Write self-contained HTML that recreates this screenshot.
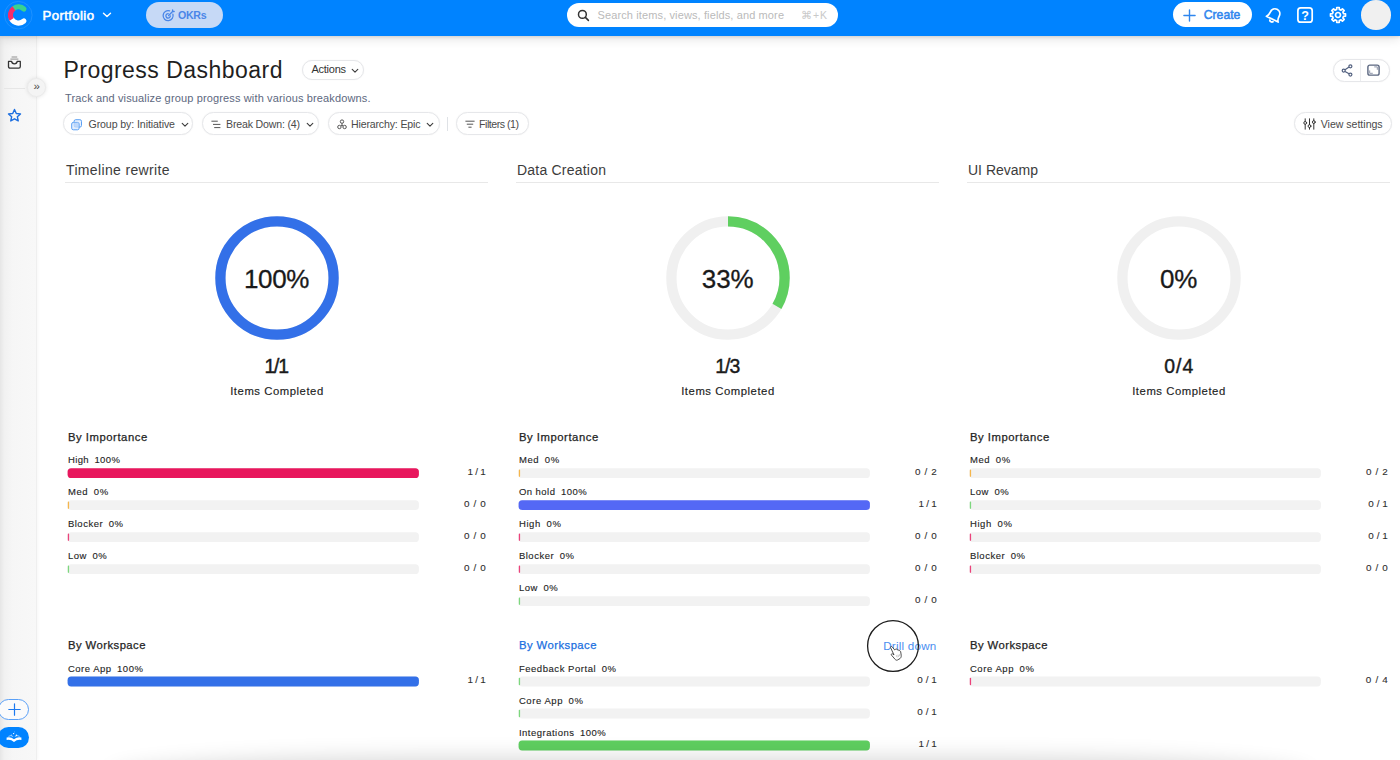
<!DOCTYPE html>
<html lang="en"><head><meta charset="utf-8"><title>Progress Dashboard</title>
<style>
*{box-sizing:border-box;margin:0;padding:0}
html,body{width:1400px;height:760px;overflow:hidden;background:#fff;font-family:"Liberation Sans",sans-serif}
body{position:relative}
.abs{position:absolute}
.t{position:absolute;white-space:pre;line-height:1;display:block}
.p{margin-left:2.3px}
.hdr{position:absolute;left:0;top:0;width:1400px;height:35.6px;background:#0083ff;box-shadow:0 1px 3px rgba(0,0,0,.12),0 3px 10px rgba(0,0,0,.11)}
.side{position:absolute;left:0;top:36px;width:36px;height:724px;background:linear-gradient(90deg,#e6e6e6 0,#f1f1f1 12%,#f6f6f6 35%,#f8f8f8 100%);box-shadow:1px 0 0 #efefef,2px 0 3px rgba(0,0,0,.035)}
.pill{position:absolute;border:1px solid #e6e7ea;border-radius:12px;background:#fff;box-shadow:0 0 1.5px rgba(0,0,0,.06)}
.hr{position:absolute;height:1px;background:#e8e8e8}
.trk{position:absolute;width:351.6px;height:10px;border-radius:4px;background:#f2f2f2;overflow:hidden}
.trk i{display:block;height:100%;border-radius:4px}

</style></head>
<body>
<div class="side"></div>
<div class="hdr"></div>
<!-- logo -->
<svg class="abs" style="left:0;top:0" width="36" height="32" viewBox="0 0 36 32">
  <circle cx="18.3" cy="15.2" r="13.8" fill="#0083ff" stroke="#2193ff" stroke-width=".9"/>
  <g fill="none" stroke-width="5.1">
  <path d="M13.74 8.45 A8.1 8.1 0 0 1 23.92 8.98" stroke="#3ad28f" stroke-linecap="round"/>
  <path d="M11.49 19.05 A8.1 8.1 0 0 0 23.92 21.02" stroke="#fff" stroke-linecap="round"/>
  <path d="M13.9 8.3 A8.1 8.1 0 0 0 11.7 19.4" stroke="#f72a69"/>
  </g>
</svg>
<!-- portfolio chevron -->
<svg class="abs" style="left:102px;top:11px" width="10" height="8" viewBox="0 0 10 8"><path d="M1.5 2.2 L5 5.6 L8.5 2.2" fill="none" stroke="#fff" stroke-width="1.4" stroke-linecap="round" stroke-linejoin="round"/></svg>
<!-- OKRs pill -->
<div class="abs" style="left:146px;top:2px;width:77px;height:25.5px;border-radius:13px;background:#c6d9f6"></div>
<svg class="abs" style="left:162px;top:8.5px" width="13" height="13" viewBox="0 0 13 13" fill="none" stroke="#4a86e8" stroke-width="1.3" stroke-linecap="round">
  <path d="M10.9 5.2 A5 5 0 1 1 7.6 1.9"/><path d="M8.3 6.8 A2.2 2.2 0 1 1 6.2 4.7"/><path d="M6.6 6.5 L10.6 2.5 M10.6 2.5 L10.6 .9 M10.6 2.5 L12.2 2.5"/>
</svg>
<!-- search -->
<div class="abs" style="left:566.5px;top:2.5px;width:271.5px;height:24.5px;border-radius:12.5px;background:#fff"></div>
<svg class="abs" style="left:577px;top:9px" width="13" height="13" viewBox="0 0 13 13" fill="none" stroke="#333" stroke-width="1.5" stroke-linecap="round"><circle cx="5.4" cy="5.4" r="3.9"/><path d="M8.4 8.4 L11.4 11.4"/></svg>
<!-- create -->
<div class="abs" style="left:1173.3px;top:2.4px;width:78.3px;height:24.8px;border-radius:12.5px;background:#fff"></div>
<svg class="abs" style="left:1183px;top:8.5px" width="13" height="13" viewBox="0 0 13 13" fill="none" stroke="#2f86ee" stroke-width="1.4" stroke-linecap="round"><path d="M6.5 .9 V12.1 M.9 6.5 H12.1"/></svg>
<!-- bell -->
<svg class="abs" style="left:1262px;top:3px" width="24" height="24" viewBox="-12 -12 24 24" fill="none" stroke="#fff" stroke-width="1.7" stroke-linecap="round" stroke-linejoin="round">
  <g transform="translate(0.2,0.2) rotate(26)"><path d="M-6.6 4.4 C-4.8 3 -4.9 .8 -4.9 -1.4 C-4.9 -4.4 -2.8 -6.6 0 -6.6 C2.8 -6.6 4.9 -4.4 4.9 -1.4 C4.9 .8 4.8 3 6.6 4.4 Z"/><path d="M-1.7 6.4 C-1 7.6 1 7.6 1.7 6.4" stroke-width="1.9"/></g>
</svg>
<!-- help -->
<svg class="abs" style="left:1296px;top:6px" width="18" height="18" viewBox="0 0 18 18" fill="none" stroke="#fff" stroke-width="1.7" stroke-linejoin="round"><rect x="1.9" y="1.9" width="14.3" height="14.3" rx="2.8"/></svg>
<span class="t" style="left:1301.3px;top:9.9px;font-size:12.6px;font-weight:700;color:#fff">?</span>
<!-- gear -->
<svg class="abs" style="left:1327.7px;top:5px" width="20" height="20" viewBox="-10 -10 20 20" fill="none" stroke="#fff" stroke-width="1.7" stroke-linejoin="round">
  <circle r="2.5"/>
  <path d="M-1.33 -5.54 L-1.25 -7.50 L1.25 -7.50 L1.33 -5.54 L2.98 -4.86 L4.42 -6.18 L6.18 -4.42 L4.86 -2.98 L5.54 -1.33 L7.50 -1.25 L7.50 1.25 L5.54 1.33 L4.86 2.98 L6.18 4.42 L4.42 6.18 L2.98 4.86 L1.33 5.54 L1.25 7.50 L-1.25 7.50 L-1.33 5.54 L-2.98 4.86 L-4.42 6.18 L-6.18 4.42 L-4.86 2.98 L-5.54 1.33 L-7.50 1.25 L-7.50 -1.25 L-5.54 -1.33 L-4.86 -2.98 L-6.18 -4.42 L-4.42 -6.18 L-2.98 -4.86 Z"/>
</svg>
<!-- avatar -->
<div class="abs" style="left:1361.3px;top:0;width:29.6px;height:29.6px;border-radius:50%;background:#f0f0f0"></div>

<!-- sidebar icons -->
<svg class="abs" style="left:7px;top:56px" width="15" height="14" viewBox="0 0 15 14" fill="none" stroke="#333" stroke-width="1.3" stroke-linecap="round" stroke-linejoin="round">
  <path d="M5 1 H9.8 M3.8 3.1 H11" stroke="#777" stroke-width=".8"/><path d="M1.5 5.4 H4.6 C4.8 7.2 5.9 7.8 7.4 7.8 C8.9 7.8 10 7.2 10.2 5.4 H13.3 V10.6 C13.3 11.6 12.7 12.2 11.7 12.2 H3.1 C2.1 12.2 1.5 11.6 1.5 10.6 Z"/>
</svg>
<div class="abs" style="left:4px;top:87.5px;width:21px;height:1px;background:#e6e6e6"></div>
<div class="abs" style="left:26.9px;top:78.3px;width:18.8px;height:18.8px;border-radius:50%;background:#f4f4f4;border:1px solid #ebebeb;box-shadow:0 0 4px rgba(0,0,0,.10)"></div>
<span class="t" style="left:33.4px;top:81.2px;font-size:11.5px;color:#4a4a4a">&#187;</span>
<svg class="abs" style="left:7.2px;top:108px" width="15" height="15" viewBox="0 0 16 16" fill="none" stroke="#1d6fe0" stroke-width="1.5" stroke-linejoin="round"><path d="M8 1.6 L9.9 5.8 L14.4 6.3 L11 9.3 L12 13.8 L8 11.5 L4 13.8 L5 9.3 L1.6 6.3 L6.1 5.8 Z"/></svg>
<div class="abs" style="left:-2px;top:698.7px;width:31.2px;height:21.5px;border-radius:10.8px;background:#fbfbfb;border:1.2px solid #5aa0f7"></div>
<svg class="abs" style="left:7.7px;top:703.1px" width="13" height="13" viewBox="0 0 13 13" fill="none" stroke="#1d7af0" stroke-width="1.2" stroke-linecap="round"><path d="M6.5 .8 V12.2 M.8 6.5 H12.2"/></svg>
<div class="abs" style="left:-2px;top:727.2px;width:31.2px;height:21px;border-radius:10.5px;background:#0083ff"></div>
<svg class="abs" style="left:6.3px;top:730.6px" width="16" height="13" viewBox="0 0 16 13" fill="#fff" stroke="none"><path d="M.6 6.6 Q4.6 5.4 8 8.2 Q11.4 5.4 15.4 6.6 V9 Q11.4 8 8 11 Q4.6 8 .6 9 Z"/><path d="M2.4 5.4 Q5 3.6 7.2 5.6 M13.6 5.4 Q11 3.6 8.8 5.6" fill="none" stroke="#fff" stroke-width=".7" opacity=".8"/><circle cx="7.6" cy="2.6" r=".7"/><circle cx="10.4" cy="4.2" r=".75"/><circle cx="5.4" cy="4" r=".5" opacity=".8"/><circle cx="8.4" cy=".9" r=".4" opacity=".7"/></svg>

<!-- title row pills -->
<div class="pill" style="left:302.3px;top:60.2px;width:62.2px;height:19.6px;border-radius:10px"></div>
<svg class="abs" style="left:351px;top:67.5px" width="8" height="6" viewBox="0 0 8 6"><path d="M1.2 1.4 L4 4.2 L6.8 1.4" fill="none" stroke="#3c3c3c" stroke-width="1.1" stroke-linecap="round" stroke-linejoin="round"/></svg>
<!-- share / expand -->
<div class="pill" style="left:1333.3px;top:58.8px;width:56.5px;height:22.8px;border-radius:11.4px"></div>
<div class="abs" style="left:1360px;top:60px;width:1px;height:20.6px;background:#ebecef"></div>
<svg class="abs" style="left:1340px;top:63px" width="14" height="15" viewBox="0 0 14 15" fill="none" stroke="#52607f" stroke-width="1.2"><circle cx="3.7" cy="7.6" r="1.5"/><circle cx="10.4" cy="3.3" r="1.5"/><circle cx="10.4" cy="11.6" r="1.5"/><path d="M5 6.8 L9.1 4.1 M5 8.4 L9.1 10.8"/></svg>
<svg class="abs" style="left:1366px;top:63px" width="15" height="14" viewBox="0 0 15 14" fill="none" stroke="#5b6780" stroke-width="1.4" stroke-linejoin="round" stroke-linecap="round"><rect x="1.9" y="2.1" width="11.2" height="10" rx="1.9"/><path d="M8.6 3.9 H11.3 V6.4 M3.7 7.8 V10.3 H6.4" stroke-width="1" stroke="#8f98ab"/></svg>

<!-- filter pills -->
<div class="pill" style="left:62.7px;top:112px;width:130.8px;height:23px"></div>
<svg class="abs" style="left:70.6px;top:118.5px" width="12" height="12" viewBox="0 0 12 12" fill="none" stroke="#5aa0f4" stroke-width="1"><rect x="3.1" y=".7" width="7.4" height="7.4" rx="1.6" fill="#eaf2fe"/><rect x=".7" y="3.4" width="7.4" height="7.4" rx="1.6" fill="#d9e8fd" fill-opacity=".75"/><rect x="3.1" y="3.4" width="5" height="4.7" fill="#a9cbf8" stroke="none" fill-opacity=".6"/></svg>
<svg class="abs" style="left:180.5px;top:121.5px" width="8" height="6" viewBox="0 0 8 6"><path d="M1.2 1.4 L4 4.2 L6.8 1.4" fill="none" stroke="#3c3c3c" stroke-width="1.1" stroke-linecap="round" stroke-linejoin="round"/></svg>

<div class="pill" style="left:202.2px;top:112px;width:117px;height:23px"></div>
<svg class="abs" style="left:211px;top:119.5px" width="10" height="9" viewBox="0 0 10 9" fill="none" stroke="#555" stroke-width="1" stroke-linecap="round"><path d="M.8 1.2 H6.4 M2.4 4.4 H9 M3.6 7.6 H9"/></svg>
<svg class="abs" style="left:305.5px;top:121.5px" width="8" height="6" viewBox="0 0 8 6"><path d="M1.2 1.4 L4 4.2 L6.8 1.4" fill="none" stroke="#3c3c3c" stroke-width="1.1" stroke-linecap="round" stroke-linejoin="round"/></svg>

<div class="pill" style="left:327.7px;top:112px;width:111.9px;height:23px"></div>
<svg class="abs" style="left:336.5px;top:119px" width="10" height="11" viewBox="0 0 10 11" fill="none" stroke="#555" stroke-width="1"><circle cx="5" cy="2.6" r="1.7"/><circle cx="2.4" cy="8" r="1.7"/><circle cx="7.6" cy="8" r="1.7"/><path d="M5 4.3 V6 M4 6.6 L6 6.6"/></svg>
<svg class="abs" style="left:425.5px;top:121.5px" width="8" height="6" viewBox="0 0 8 6"><path d="M1.2 1.4 L4 4.2 L6.8 1.4" fill="none" stroke="#3c3c3c" stroke-width="1.1" stroke-linecap="round" stroke-linejoin="round"/></svg>

<div class="abs" style="left:447px;top:116.6px;width:1px;height:14px;background:#dfe2e6"></div>
<div class="pill" style="left:456px;top:112px;width:72.7px;height:23px"></div>
<svg class="abs" style="left:464.5px;top:120px" width="10" height="9" viewBox="0 0 10 9" fill="none" stroke="#555" stroke-width="1" stroke-linecap="round"><path d="M.8 1.2 H9.2 M2.2 4.2 H7.8 M3.8 7.2 H6.2"/></svg>

<div class="pill" style="left:1294.4px;top:112px;width:98px;height:23px"></div>
<svg class="abs" style="left:1303px;top:118px" width="13" height="12" viewBox="0 0 13 12" fill="none" stroke="#333" stroke-width="1" stroke-linecap="round"><path d="M2.2 .8 V3.4 M2.2 6.4 V11.2 M6.5 .8 V6.6 M6.5 9.6 V11.2 M10.8 .8 V2.6 M10.8 5.6 V11.2"/><circle cx="2.2" cy="4.9" r="1.4"/><circle cx="6.5" cy="8.1" r="1.4"/><circle cx="10.8" cy="4.1" r="1.4"/></svg>

<div class="hr" style="left:65px;top:182px;width:423px"></div>
<svg class="abs" style="left:212.7px;top:214.39999999999998px" width="128" height="128" viewBox="-64 -64 128 128"><circle r="56.6" fill="none" stroke="#f0f0f0" stroke-width="10.3"/><circle r="56.6" fill="none" stroke="#3370e8" stroke-width="10.3" stroke-dasharray="355.63 355.63" transform="rotate(-90)"/></svg>
<div class="hr" style="left:516px;top:182px;width:423px"></div>
<svg class="abs" style="left:663.7px;top:214.39999999999998px" width="128" height="128" viewBox="-64 -64 128 128"><circle r="56.6" fill="none" stroke="#f0f0f0" stroke-width="10.3"/><circle r="56.6" fill="none" stroke="#5fcf60" stroke-width="10.3" stroke-dasharray="118.54 355.63" transform="rotate(-90)"/></svg>
<div class="hr" style="left:967px;top:182px;width:423px"></div>
<svg class="abs" style="left:1114.7px;top:214.39999999999998px" width="128" height="128" viewBox="-64 -64 128 128"><circle r="56.6" fill="none" stroke="#f0f0f0" stroke-width="10.3"/></svg>
<svg class="abs" style="left:0;top:0" width="1400" height="760" viewBox="0 0 1400 760"><rect x="67.6" y="468.2" width="351.3" height="9.8" rx="3.6" fill="#f2f2f2"/><rect x="67.6" y="468.2" width="351.3" height="9.8" rx="3.6" fill="#e8175d"/><rect x="67.6" y="500.2" width="351.3" height="9.8" rx="3.6" fill="#f2f2f2"/><rect x="67.8" y="501.4" width="1.3" height="7.4" rx=".65" fill="#f5a623" fill-opacity=".8"/><rect x="67.6" y="532.2" width="351.3" height="9.8" rx="3.6" fill="#f2f2f2"/><rect x="67.8" y="533.4" width="1.3" height="7.4" rx=".65" fill="#e8175d" fill-opacity=".8"/><rect x="67.6" y="564.2" width="351.3" height="9.8" rx="3.6" fill="#f2f2f2"/><rect x="67.8" y="565.4" width="1.3" height="7.4" rx=".65" fill="#5fcf60" fill-opacity=".8"/><rect x="67.6" y="676.6" width="351.3" height="9.8" rx="3.6" fill="#f2f2f2"/><rect x="67.6" y="676.6" width="351.3" height="9.8" rx="3.6" fill="#3370e8"/><rect x="518.6" y="468.2" width="351.3" height="9.8" rx="3.6" fill="#f2f2f2"/><rect x="518.8" y="469.4" width="1.3" height="7.4" rx=".65" fill="#f5a623" fill-opacity=".8"/><rect x="518.6" y="500.2" width="351.3" height="9.8" rx="3.6" fill="#f2f2f2"/><rect x="518.6" y="500.2" width="351.3" height="9.8" rx="3.6" fill="#5468f5"/><rect x="518.6" y="532.2" width="351.3" height="9.8" rx="3.6" fill="#f2f2f2"/><rect x="518.8" y="533.4" width="1.3" height="7.4" rx=".65" fill="#e8175d" fill-opacity=".8"/><rect x="518.6" y="564.2" width="351.3" height="9.8" rx="3.6" fill="#f2f2f2"/><rect x="518.8" y="565.4" width="1.3" height="7.4" rx=".65" fill="#e8175d" fill-opacity=".8"/><rect x="518.6" y="596.2" width="351.3" height="9.8" rx="3.6" fill="#f2f2f2"/><rect x="518.8" y="597.4" width="1.3" height="7.4" rx=".65" fill="#5fcf60" fill-opacity=".8"/><rect x="518.6" y="676.6" width="351.3" height="9.8" rx="3.6" fill="#f2f2f2"/><rect x="518.8" y="677.8" width="1.3" height="7.4" rx=".65" fill="#5fcf60" fill-opacity=".8"/><rect x="518.6" y="708.6" width="351.3" height="9.8" rx="3.6" fill="#f2f2f2"/><rect x="518.8" y="709.8" width="1.3" height="7.4" rx=".65" fill="#5fcf60" fill-opacity=".8"/><rect x="518.6" y="740.6" width="351.3" height="9.8" rx="3.6" fill="#f2f2f2"/><rect x="518.6" y="740.6" width="351.3" height="9.8" rx="3.6" fill="#5fcf60"/><rect x="969.6" y="468.2" width="351.3" height="9.8" rx="3.6" fill="#f2f2f2"/><rect x="969.8" y="469.4" width="1.3" height="7.4" rx=".65" fill="#f5a623" fill-opacity=".8"/><rect x="969.6" y="500.2" width="351.3" height="9.8" rx="3.6" fill="#f2f2f2"/><rect x="969.8" y="501.4" width="1.3" height="7.4" rx=".65" fill="#5fcf60" fill-opacity=".8"/><rect x="969.6" y="532.2" width="351.3" height="9.8" rx="3.6" fill="#f2f2f2"/><rect x="969.8" y="533.4" width="1.3" height="7.4" rx=".65" fill="#e8175d" fill-opacity=".8"/><rect x="969.6" y="564.2" width="351.3" height="9.8" rx="3.6" fill="#f2f2f2"/><rect x="969.8" y="565.4" width="1.3" height="7.4" rx=".65" fill="#e8175d" fill-opacity=".8"/><rect x="969.6" y="676.6" width="351.3" height="9.8" rx="3.6" fill="#f2f2f2"/><rect x="969.8" y="677.8" width="1.3" height="7.4" rx=".65" fill="#e8175d" fill-opacity=".8"/></svg>
<span class="t" style="top:8.63px;font-size:13.2px;color:#fff;letter-spacing:0.389px;-webkit-text-stroke:0.55px #fff;left:42.5px;">Portfolio</span>
<span class="t" style="top:9.63px;font-size:10.6px;color:#4a86e8;font-weight:700;letter-spacing:-0.279px;left:178px;">OKRs</span>
<span class="t" style="top:9.69px;font-size:11px;color:#bababa;letter-spacing:0.120px;left:597.5px;">Search items, views, fields, and more</span>
<span class="t" style="top:10.11px;font-size:10.5px;color:#c9c9c9;letter-spacing:-0.996px;left:801px;">⌘ + K</span>
<span class="t" style="top:9.07px;font-size:12.2px;color:#2f86ee;letter-spacing:0.021px;-webkit-text-stroke:0.5px #2f86ee;left:1203.7px;">Create</span>
<span class="t" style="top:59.33px;font-size:23px;color:#1f1f1f;letter-spacing:0.473px;left:63.5px;">Progress Dashboard</span>
<span class="t" style="top:64.19px;font-size:11px;color:#333;letter-spacing:-0.263px;left:311.5px;">Actions</span>
<span class="t" style="top:92.69px;font-size:11px;color:#5d6880;letter-spacing:0.141px;left:65px;">Track and visualize group progress with various breakdowns.</span>
<span class="t" style="top:119.43px;font-size:10.6px;color:#4a4a4a;letter-spacing:-0.096px;left:88.5px;">Group by: Initiative</span>
<span class="t" style="top:119.43px;font-size:10.6px;color:#4a4a4a;letter-spacing:-0.182px;left:226px;">Break Down: (4)</span>
<span class="t" style="top:119.43px;font-size:10.6px;color:#4a4a4a;letter-spacing:-0.166px;left:351px;">Hierarchy: Epic</span>
<span class="t" style="top:119.43px;font-size:10.6px;color:#4a4a4a;letter-spacing:-0.473px;left:479px;">Filters (1)</span>
<span class="t" style="top:119.43px;font-size:10.6px;color:#4a4a4a;letter-spacing:-0.020px;left:1320.7px;">View settings</span>
<span class="t" style="top:162.65px;font-size:14px;color:#3c3c3c;letter-spacing:0.348px;left:66px;">Timeline rewrite</span>
<span class="t" style="top:265.79px;font-size:26px;color:#1a1a1a;letter-spacing:-0.333px;-webkit-text-stroke:0.3px #1a1a1a;left:276.53px;transform:translateX(-50%);">100%</span>
<span class="t" style="top:357.38px;font-size:19.4px;color:#1a1a1a;letter-spacing:-1.234px;-webkit-text-stroke:0.42px #1a1a1a;left:276.08px;transform:translateX(-50%);">1/1</span>
<span class="t" style="top:385.93px;font-size:11.3px;color:#222;letter-spacing:0.544px;-webkit-text-stroke:0.15px #222;left:276.97px;transform:translateX(-50%);">Items Completed</span>
<span class="t" style="top:432.03px;font-size:11.3px;color:#242424;letter-spacing:0.538px;-webkit-text-stroke:0.25px #242424;left:67.9px;">By Importance</span>
<span class="t" style="top:455.36px;font-size:9.5px;color:#242424;letter-spacing:0.400px;-webkit-text-stroke:0.12px #242424;left:67.9px;">High <span class="p">100%</span></span>
<span class="t" style="top:466.72px;font-size:9.9px;color:#2e2e2e;letter-spacing:-0.255px;-webkit-text-stroke:0.1px #2e2e2e;right:914.45px;">1 / 1</span>
<span class="t" style="top:487.36px;font-size:9.5px;color:#242424;letter-spacing:0.609px;-webkit-text-stroke:0.12px #242424;left:67.9px;">Med <span class="p">0%</span></span>
<span class="t" style="top:498.72px;font-size:9.9px;color:#2e2e2e;letter-spacing:0.645px;-webkit-text-stroke:0.1px #2e2e2e;right:913.55px;">0 / 0</span>
<span class="t" style="top:519.36px;font-size:9.5px;color:#242424;letter-spacing:0.516px;-webkit-text-stroke:0.12px #242424;left:67.9px;">Blocker <span class="p">0%</span></span>
<span class="t" style="top:530.72px;font-size:9.9px;color:#2e2e2e;letter-spacing:0.645px;-webkit-text-stroke:0.1px #2e2e2e;right:913.55px;">0 / 0</span>
<span class="t" style="top:551.36px;font-size:9.5px;color:#242424;letter-spacing:0.538px;-webkit-text-stroke:0.12px #242424;left:67.9px;">Low <span class="p">0%</span></span>
<span class="t" style="top:562.72px;font-size:9.9px;color:#2e2e2e;letter-spacing:0.645px;-webkit-text-stroke:0.1px #2e2e2e;right:913.55px;">0 / 0</span>
<span class="t" style="top:640.33px;font-size:11.3px;color:#242424;letter-spacing:0.452px;-webkit-text-stroke:0.25px #242424;left:67.9px;">By Workspace</span>
<span class="t" style="top:663.76px;font-size:9.5px;color:#242424;letter-spacing:0.512px;-webkit-text-stroke:0.12px #242424;left:67.9px;">Core App <span class="p">100%</span></span>
<span class="t" style="top:675.12px;font-size:9.9px;color:#2e2e2e;letter-spacing:-0.255px;-webkit-text-stroke:0.1px #2e2e2e;right:914.45px;">1 / 1</span>
<span class="t" style="top:162.65px;font-size:14px;color:#3c3c3c;letter-spacing:0.217px;left:517px;">Data Creation</span>
<span class="t" style="top:265.79px;font-size:26px;color:#1a1a1a;letter-spacing:-0.023px;-webkit-text-stroke:0.3px #1a1a1a;left:727.69px;transform:translateX(-50%);">33%</span>
<span class="t" style="top:357.38px;font-size:19.4px;color:#1a1a1a;letter-spacing:-0.984px;-webkit-text-stroke:0.42px #1a1a1a;left:727.21px;transform:translateX(-50%);">1/3</span>
<span class="t" style="top:385.93px;font-size:11.3px;color:#222;letter-spacing:0.544px;-webkit-text-stroke:0.15px #222;left:727.97px;transform:translateX(-50%);">Items Completed</span>
<span class="t" style="top:432.03px;font-size:11.3px;color:#242424;letter-spacing:0.538px;-webkit-text-stroke:0.25px #242424;left:518.9px;">By Importance</span>
<span class="t" style="top:455.36px;font-size:9.5px;color:#242424;letter-spacing:0.609px;-webkit-text-stroke:0.12px #242424;left:518.9px;">Med <span class="p">0%</span></span>
<span class="t" style="top:466.72px;font-size:9.9px;color:#2e2e2e;letter-spacing:0.645px;-webkit-text-stroke:0.1px #2e2e2e;right:462.55px;">0 / 2</span>
<span class="t" style="top:487.36px;font-size:9.5px;color:#242424;letter-spacing:0.470px;-webkit-text-stroke:0.12px #242424;left:518.9px;">On hold <span class="p">100%</span></span>
<span class="t" style="top:498.72px;font-size:9.9px;color:#2e2e2e;letter-spacing:-0.255px;-webkit-text-stroke:0.1px #2e2e2e;right:463.45px;">1 / 1</span>
<span class="t" style="top:519.36px;font-size:9.5px;color:#242424;letter-spacing:0.630px;-webkit-text-stroke:0.12px #242424;left:518.9px;">High <span class="p">0%</span></span>
<span class="t" style="top:530.72px;font-size:9.9px;color:#2e2e2e;letter-spacing:0.645px;-webkit-text-stroke:0.1px #2e2e2e;right:462.55px;">0 / 0</span>
<span class="t" style="top:551.36px;font-size:9.5px;color:#242424;letter-spacing:0.516px;-webkit-text-stroke:0.12px #242424;left:518.9px;">Blocker <span class="p">0%</span></span>
<span class="t" style="top:562.72px;font-size:9.9px;color:#2e2e2e;letter-spacing:0.645px;-webkit-text-stroke:0.1px #2e2e2e;right:462.55px;">0 / 0</span>
<span class="t" style="top:583.36px;font-size:9.5px;color:#242424;letter-spacing:0.538px;-webkit-text-stroke:0.12px #242424;left:518.9px;">Low <span class="p">0%</span></span>
<span class="t" style="top:594.72px;font-size:9.9px;color:#2e2e2e;letter-spacing:0.645px;-webkit-text-stroke:0.1px #2e2e2e;right:462.55px;">0 / 0</span>
<span class="t" style="top:640.33px;font-size:11.3px;color:#1a6fe0;letter-spacing:0.452px;-webkit-text-stroke:0.25px #1a6fe0;left:518.9px;">By Workspace</span>
<span class="t" style="top:639.98px;font-size:11.6px;color:#4a8ef0;letter-spacing:0.233px;left:883.2px;">Drill down</span>
<span class="t" style="top:663.76px;font-size:9.5px;color:#242424;letter-spacing:0.538px;-webkit-text-stroke:0.12px #242424;left:518.9px;">Feedback Portal <span class="p">0%</span></span>
<span class="t" style="top:675.12px;font-size:9.9px;color:#2e2e2e;letter-spacing:0.095px;-webkit-text-stroke:0.1px #2e2e2e;right:463.10px;">0 / 1</span>
<span class="t" style="top:695.76px;font-size:9.5px;color:#242424;letter-spacing:0.572px;-webkit-text-stroke:0.12px #242424;left:518.9px;">Core App <span class="p">0%</span></span>
<span class="t" style="top:707.12px;font-size:9.9px;color:#2e2e2e;letter-spacing:0.095px;-webkit-text-stroke:0.1px #2e2e2e;right:463.10px;">0 / 1</span>
<span class="t" style="top:727.76px;font-size:9.5px;color:#242424;letter-spacing:0.493px;-webkit-text-stroke:0.12px #242424;left:518.9px;">Integrations <span class="p">100%</span></span>
<span class="t" style="top:739.12px;font-size:9.9px;color:#2e2e2e;letter-spacing:-0.255px;-webkit-text-stroke:0.1px #2e2e2e;right:463.45px;">1 / 1</span>
<span class="t" style="top:162.65px;font-size:14px;color:#3c3c3c;letter-spacing:-0.004px;left:968px;">UI Revamp</span>
<span class="t" style="top:265.79px;font-size:26px;color:#1a1a1a;letter-spacing:-0.078px;-webkit-text-stroke:0.3px #1a1a1a;left:1178.66px;transform:translateX(-50%);">0%</span>
<span class="t" style="top:357.38px;font-size:19.4px;color:#1a1a1a;letter-spacing:1.016px;-webkit-text-stroke:0.42px #1a1a1a;left:1179.21px;transform:translateX(-50%);">0/4</span>
<span class="t" style="top:385.93px;font-size:11.3px;color:#222;letter-spacing:0.544px;-webkit-text-stroke:0.15px #222;left:1178.97px;transform:translateX(-50%);">Items Completed</span>
<span class="t" style="top:432.03px;font-size:11.3px;color:#242424;letter-spacing:0.538px;-webkit-text-stroke:0.25px #242424;left:969.9px;">By Importance</span>
<span class="t" style="top:455.36px;font-size:9.5px;color:#242424;letter-spacing:0.609px;-webkit-text-stroke:0.12px #242424;left:969.9px;">Med <span class="p">0%</span></span>
<span class="t" style="top:466.72px;font-size:9.9px;color:#2e2e2e;letter-spacing:0.645px;-webkit-text-stroke:0.1px #2e2e2e;right:11.55px;">0 / 2</span>
<span class="t" style="top:487.36px;font-size:9.5px;color:#242424;letter-spacing:0.538px;-webkit-text-stroke:0.12px #242424;left:969.9px;">Low <span class="p">0%</span></span>
<span class="t" style="top:498.72px;font-size:9.9px;color:#2e2e2e;letter-spacing:0.095px;-webkit-text-stroke:0.1px #2e2e2e;right:12.10px;">0 / 1</span>
<span class="t" style="top:519.36px;font-size:9.5px;color:#242424;letter-spacing:0.630px;-webkit-text-stroke:0.12px #242424;left:969.9px;">High <span class="p">0%</span></span>
<span class="t" style="top:530.72px;font-size:9.9px;color:#2e2e2e;letter-spacing:0.095px;-webkit-text-stroke:0.1px #2e2e2e;right:12.10px;">0 / 1</span>
<span class="t" style="top:551.36px;font-size:9.5px;color:#242424;letter-spacing:0.516px;-webkit-text-stroke:0.12px #242424;left:969.9px;">Blocker <span class="p">0%</span></span>
<span class="t" style="top:562.72px;font-size:9.9px;color:#2e2e2e;letter-spacing:0.645px;-webkit-text-stroke:0.1px #2e2e2e;right:11.55px;">0 / 0</span>
<span class="t" style="top:640.33px;font-size:11.3px;color:#242424;letter-spacing:0.452px;-webkit-text-stroke:0.25px #242424;left:969.9px;">By Workspace</span>
<span class="t" style="top:663.76px;font-size:9.5px;color:#242424;letter-spacing:0.572px;-webkit-text-stroke:0.12px #242424;left:969.9px;">Core App <span class="p">0%</span></span>
<span class="t" style="top:675.12px;font-size:9.9px;color:#2e2e2e;letter-spacing:0.695px;-webkit-text-stroke:0.1px #2e2e2e;right:11.50px;">0 / 4</span>
<!-- bottom soft shadow -->
<div class="abs" style="left:120px;top:768px;width:1180px;height:20px;border-radius:50%/100%;box-shadow:0 0 22px 10px rgba(0,0,0,.16)"></div>
<!-- cursor highlight -->
<svg class="abs" style="left:864px;top:617px" width="58" height="58" viewBox="-29 -29 58 58">
  <circle r="25.4" fill="none" stroke="#1c1c1c" stroke-width="1.3"/>
  <g transform="translate(-3.3,0.9) scale(.9)" >
   <path d="M1.2 1.2 C.2 .2 1.6 -1.2 2.6 -.2 L5.6 3.4 L6.6 2.6 C7.4 2 8.4 2.6 8.4 3.4 C9.2 2.8 10.2 3.4 10.2 4.2 C11 3.8 12 4.4 12.2 5.4 L12.8 9.4 C13 11 12.4 12.2 11.4 13 L8.6 14.6 C7.6 15 6.8 14.8 6.2 14 L2 9.2 C1.2 8.2 2.4 7 3.4 7.8 L4.8 9 Z" fill="#fff" stroke="#3c3c3c" stroke-width="1" stroke-linejoin="round"/>
   <path d="M7.4 9.4 L8.4 11.6 M9 8.8 L10 11 M10.6 8.2 L11.4 10.2" stroke="#888" stroke-width=".6" fill="none"/>
  </g>
</svg>

</body></html>
